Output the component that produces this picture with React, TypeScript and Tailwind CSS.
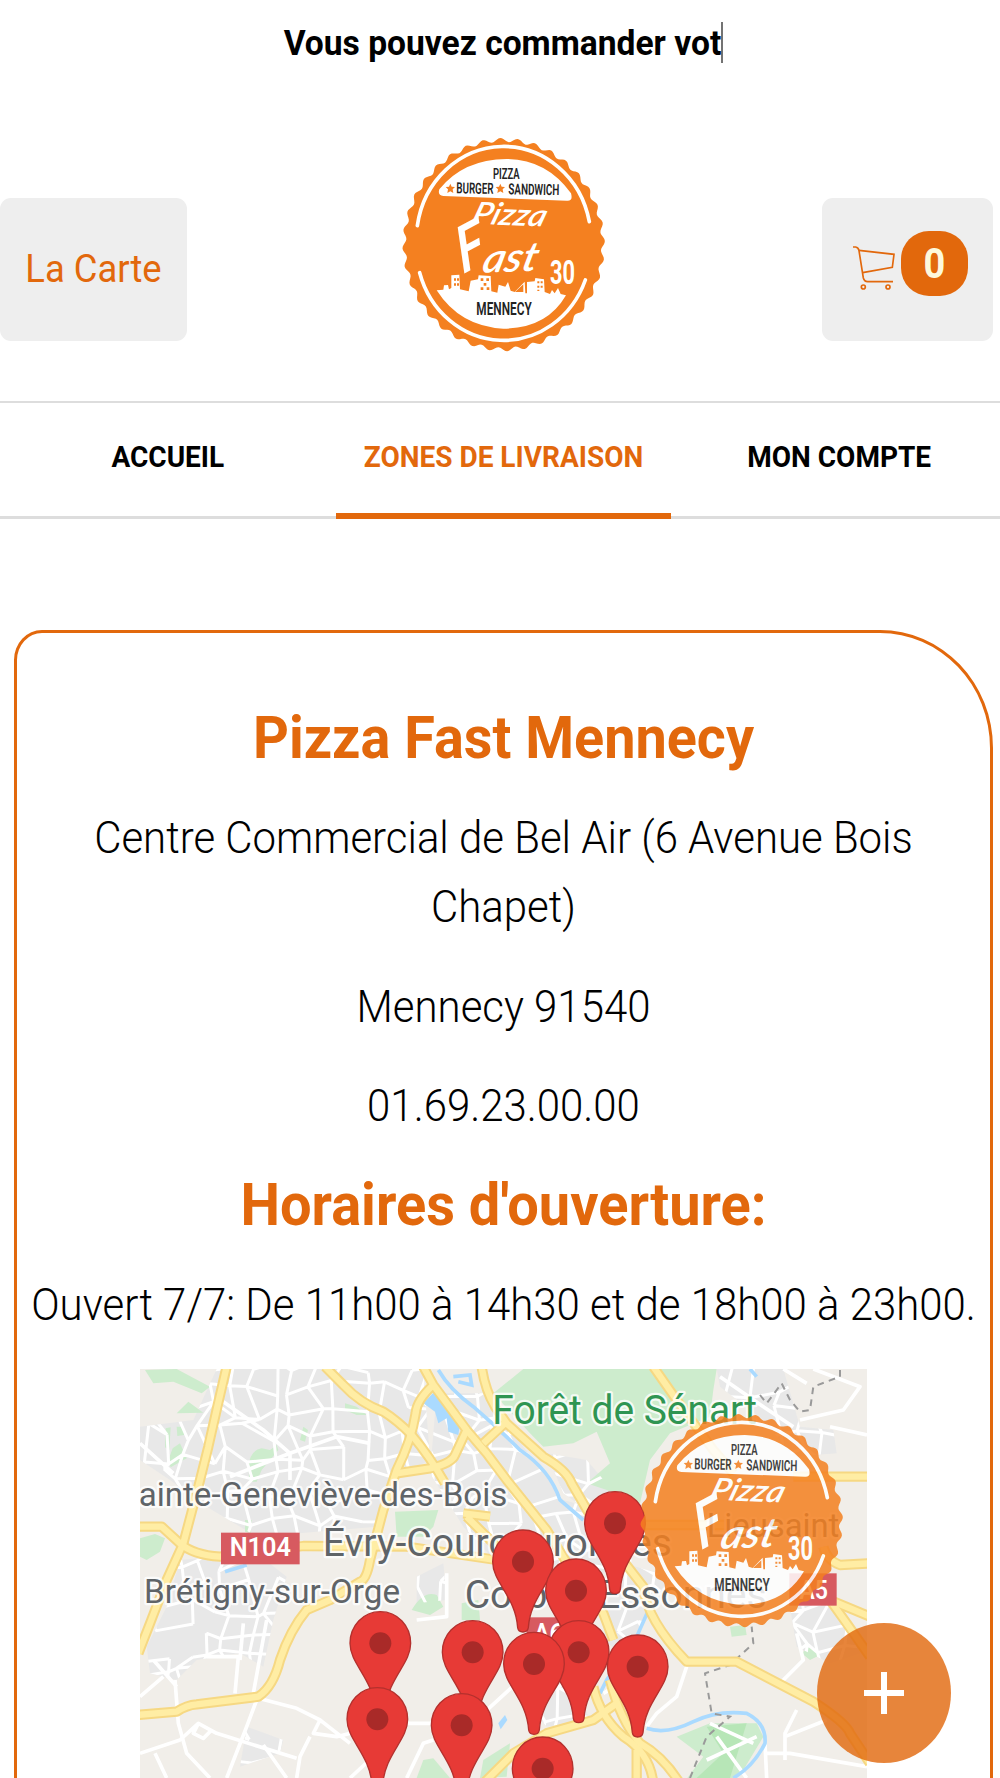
import { useMemo } from "react";

const ROADS = [
  "M290 20 L262 140 L235 260 L205 380 L160 550 L110 660 L60 790 L25 880",
  "M585 20 L640 75 Q690 130 760 155 Q800 180 845 225 Q900 290 945 370",
  "M880 20 L910 75 L1010 210 L1070 280 L1130 360 L1250 510 L1330 640 L1420 760 L1450 840",
  "M910 75 Q860 120 857 160 Q845 240 800 330 L760 450 L720 600 Q710 660 690 665 L600 720 L530 750 Q480 810 450 900 Q430 980 385 1010 L200 1033 Q170 1035 140 1055 L20 1065",
  "M800 340 L900 325 Q965 310 975 285 L1010 210",
  "M20 500 L95 500 L150 550 Q190 585 270 590 L520 558 L830 560 L1100 600",
  "M1055 20 Q1065 90 1095 140 L1130 190 L1240 290 Q1310 330 1325 370 L1400 500 L1540 680 Q1550 780 1670 905 L1820 905 L2050 1025 Q2150 1090 2160 1120 L2220 1210",
  "M1060 250 L1130 185",
  "M1570 20 L1640 120 L1750 270 L1810 340",
  "M2220 350 L1990 350",
  "M1500 495 L1800 495",
  "M2220 610 L2130 615 Q2090 600 2080 560",
  "M2100 720 L2220 770",
  "M2100 720 L2150 790 L2220 890",
  "M1390 980 Q1410 1070 1480 1130 Q1560 1180 1570 1270",
  "M1440 960 Q1470 1080 1530 1150 Q1600 1190 1650 1270",
  "M1060 1270 L1150 1180 L1250 1120 L1390 1080 L1460 1030",
  "M1000 460 L1080 470 M1010 470 L1100 560",
  "M1520 1170 L1520 1270",
];

const URBAN = [
  "M30 200 L190 180 L260 27 L880 27 L900 300 L800 350 L740 500 L380 530 L230 440 L120 360 L30 300Z",
  "M150 600 L380 580 L470 650 L430 780 L400 920 L330 880 L200 900 L140 960 L60 940 L50 860 L110 740Z",
  "M920 100 L1060 100 L1300 420 L1520 480 L1500 640 L1130 640 L1000 500 L900 340Z",
  "M1250 280 L1370 300 L1480 430 L1400 470 L1300 400Z",
  "M1760 27 L1960 27 L2010 200 L2110 210 L2120 280 L1990 290 L1900 180 L1770 80Z",
  "M1450 600 L1620 650 L1560 740 L1500 900 L1420 840Z",
  "M1980 740 L2110 730 L2190 880 L2100 910 L2000 860Z",
  "M350 1100 L460 1140 L450 1180 L330 1220Z",
  "M1170 1000 L1330 960 L1380 1080 L1250 1100Z",
  "M860 650 L940 610 L950 720 L860 730Z",
];

const GREENS = [
  "M45 30 L140 27 L240 80 L215 100 L130 65 L70 70Z",
  "M140 160 L175 125 L220 158Z",
  "M107 205 L122 202 L118 270 L105 262Z",
  "M140 200 L162 200 L162 225 L142 228Z",
  "M128 265 L150 250 L170 295 L122 322 L115 300Z",
  "M355 320 Q360 270 395 265 L420 270 L440 255 L445 270 L395 330 L380 365 L358 365Z",
  "M645 130 L680 140 L710 165 L680 165 L645 150Z",
  "M795 455 L925 450 L910 500 L880 530 L800 530Z",
  "M30 535 L75 522 L105 535 L90 575 L50 600 L30 590Z",
  "M845 750 Q880 690 920 705 L940 740 L900 765Z",
  "M345 480 L365 480 L362 520 L345 515Z",
  "M995 730 L1045 720 L1050 780 L995 780Z",
  "M510 240 L520 200 L534 210 L525 245Z",
  "M1180 27 L1760 27 L1750 90 L1740 170 L1620 220 L1560 300 L1530 430 L1460 400 L1370 370 L1440 310 L1400 215 L1330 250 L1240 260 L1200 220 L1090 100Z",
  "M1060 1200 L1140 1150 L1130 1250 L1050 1254Z",
  "M860 1254 L880 1200 L910 1195 L960 1254Z",
  "M1640 1130 L1740 1090 L1880 1090 L1900 1130 L1840 1230 L1800 1270 L1660 1270 L1720 1190Z",
  "M1800 800 L1845 795 L1850 825 L1805 830Z",
  "M2015 880 L2040 860 L2070 885 L2040 900Z",
];

const PINS = [
  [1455, 490],
  [1179, 605],
  [1338, 692],
  [751, 850],
  [1028, 877],
  [1346, 877],
  [1212, 912],
  [1523, 920],
  [742, 1078],
  [995, 1096],
  [1238, 1226],
];

function scallop(cx: number, cy: number, rx: number, ry: number) {
  const pts: string[] = [];
  for (let i = 0; i < 360; i++) {
    const t = (i / 360) * Math.PI * 2;
    const k = 1 + 0.019 * Math.cos(t * 36 + 1.2);
    pts.push(`${(cx + rx * k * Math.cos(t)).toFixed(1)} ${(cy + ry * k * Math.sin(t)).toFixed(1)}`);
  }
  return `M${pts.join("L")}Z`;
}

// Small side streets, drawn inside the built-up areas only
function streets() {
  let seed = 7;
  const rnd = () => {
    seed = (seed * 16807) % 2147483647;
    return seed / 2147483647;
  };
  const cols = 34;
  const rows = 20;
  const grid = Array.from({ length: rows * cols }, (_, i) => [
    30 + (i % cols) * 66 + (rnd() - 0.5) * 58,
    20 + Math.floor(i / cols) * 66 + (rnd() - 0.5) * 58,
  ]);
  let d = "";
  grid.forEach(([x, y], i) => {
    const right = grid[i + 1];
    const down = grid[i + cols];
    if (right && (i + 1) % cols !== 0 && rnd() > 0.12) d += `M${x} ${y}L${right[0]} ${right[1]}`;
    if (down && rnd() > 0.12) d += `M${x} ${y}L${down[0]} ${down[1]}`;
  });
  return d;
}

function Logo({ className }: { className?: string }) {
  return (
    <svg viewBox="0 0 690 690" className={className} fontFamily="Roboto, sans-serif">
      <path d={scallop(341, 344, 298, 314)} fill="#f48020" />
      <g fill="none" stroke="#fff" strokeWidth="11" strokeLinecap="round">
        <path d="M82 287 A262 280 0 0 1 598 275" />
        <path d="M89 428 A262 280 0 0 0 586 450" />
      </g>
      <path d="M148 178 Q220 88 350 87 Q470 88 543 190 Q550 214 530 212 L160 198 Q142 196 148 178Z" fill="#fff" />
      <path
        d="M140 481 L160 479 L162 466 L174 465 L177 478 L184 474 L184 436 L208 434 L210 478 L236 484 L242 452 L264 448 L266 436 L302 438 L304 484 L322 488 L326 464 L346 470 L354 456 L362 482 L374 486 L404 455 L406 490 L411 490 L411 456 L434 454 L436 444 L462 448 L464 486 L480 492 L486 480 L494 490 L504 474 L512 492 L528 496 Q470 596 340 596 Q210 590 140 481Z"
        fill="#fff"
      />
      <g fill="#f48020">
        <path d="M192 445h6v7h-6zM201 445h6v7h-6zM192 460h6v7h-6zM201 460h6v7h-6z" />
        <path d="M272 445h8v8h-8zM289 445h8v8h-8zM281 459h8v8h-8zM272 472h8v8h-8zM290 472h8v8h-8z" />
        <path d="M442 454h6v6h-6zM452 454h6v6h-6zM442 467h6v6h-6zM452 467h6v6h-6zM442 479h6v4h-6z" />
        <path d="M375 486 L400 463 L400 486Z" />
        <path d="M181 161 l4 9 10 1 -7 7 2 11 -9 -5 -9 5 2 -11 -7 -7 10 -1z" />
        <path d="M331 161 l4 9 10 1 -7 7 2 11 -9 -5 -9 5 2 -11 -7 -7 10 -1z" />
      </g>
      <g fill="#222" fontWeight="600" fontSize="46">
        <text x="309" y="147" textLength="80" lengthAdjust="spacingAndGlyphs">PIZZA</text>
        <text x="199" y="190" textLength="111" lengthAdjust="spacingAndGlyphs" transform="rotate(1 199 190)">BURGER</text>
        <text x="355" y="193" textLength="153" lengthAdjust="spacingAndGlyphs" transform="rotate(1 355 193)">SANDWICH</text>
        <text x="259" y="556" fontSize="56" textLength="166" lengthAdjust="spacingAndGlyphs">MENNECY</text>
      </g>
      <g fill="#fff" fontWeight="600" fontStyle="italic" fontFamily="Lato, sans-serif">
        <text fontSize="92" textLength="222" lengthAdjust="spacingAndGlyphs" transform="translate(240 281) rotate(2) skewX(-16)">Pizza</text>
        <text fontSize="176" fontWeight="400" textLength="84" lengthAdjust="spacingAndGlyphs" stroke="#fff" strokeWidth="6" transform="translate(218 430) rotate(-28) skewX(-14)">F</text>
        <text fontSize="122" textLength="164" lengthAdjust="spacingAndGlyphs" transform="translate(272 428) rotate(-2) skewX(-16)">ast</text>
      </g>
      <text x="480" y="461" fill="#fff" fontSize="98" fontWeight="700" textLength="75" lengthAdjust="spacingAndGlyphs">30</text>
    </svg>
  );
}

function CartIcon() {
  return (
    <svg viewBox="0 0 126 132" className="w-[42px] h-[44px]" fill="none" stroke="#e2680c" strokeWidth="5">
      <path d="M0 3 H8 Q16 4 18 14 L31 96 Q34 107 44 107 H120" />
      <path d="M18 13 L123 25 L118 64 L29 80" />
      <circle cx="31" cy="123" r="6" />
      <circle cx="105" cy="123" r="6" />
    </svg>
  );
}

function DeliveryMap() {
  const side = useMemo(streets, []);
  return (
    <svg viewBox="30 27 2181 1227" className="w-[727px] h-[409px]" fontFamily="Roboto, sans-serif">
      <defs>
        <clipPath id="urban">
          {URBAN.map((d) => <path key={d} d={d} />)}
        </clipPath>
      </defs>
      <rect x="30" y="27" width="2181" height="1227" fill="#f1eee9" />
      {URBAN.map((d) => <path key={d} d={d} fill="#e8e8e8" />)}
      {GREENS.map((d) => <path key={d} d={d} fill="#cdeccd" />)}
      <path d="M1730 1100 L1850 1090 L1800 1254 L1700 1254 L1780 1180Z" fill="#b7e6b7" />
      <path d={side} clipPath="url(#urban)" fill="none" stroke="#fff" strokeWidth="9" />

      <g fill="none" stroke="#fff" strokeWidth="11" strokeLinejoin="round">
        <path d="M30 250 L130 340 M280 125 L400 210 L480 280 L480 360 M480 280 L620 230 L720 250 M480 280 L300 350" />
        <path d="M385 1015 L500 1045 L570 1080 L550 1120 L620 1130 L700 1110 M570 1080 L660 1150" />
        <path d="M380 1020 L350 1100 L290 1254 M135 960 L145 1090 L170 1180 L240 1254" />
        <path d="M30 1180 L150 1140 L205 1090 L260 1120 L500 1195 M205 1090 L190 1120 L220 1135 L245 1110" />
        <path d="M500 1254 L510 1190 L540 1130 M400 1155 L470 1254 M75 1180 L110 1254" />
        <path d="M230 890 L325 890 L315 1000 M340 790 L330 900 M410 780 L370 1000" />
        <path d="M70 900 L140 980 M30 1010 L100 950 M950 640 L950 770 L860 780" />
        <path d="M830 1090 L910 1090 M830 1254 L880 1150 L910 1140 M660 1254 L740 1180" />
        <path d="M1060 1060 L1180 950 M1770 50 L1900 140 L1990 200 M2050 27 L2190 80 L2140 150 L2010 180" />
        <path d="M2100 200 L2211 225 M1960 27 L2030 70" />
        <path d="M1670 920 L1640 1010 L1580 1060 L1550 1100 M1540 930 L1420 1000" />
        <path d="M2000 820 L2020 900 L1950 970 M2000 1050 L1965 1120 L1965 1200 M1965 1130 L2090 1080 M1905 1150 L1910 1254" />
        <path d="M1910 1180 L1980 1180 L2211 1220 M1740 1090 L1870 1150 M1730 1200 L1880 1130 M1760 1130 L1850 1254" />
      </g>

      <g fill="none" stroke="#aadaff" strokeWidth="11">
        <path d="M925 30 Q960 90 1030 140 Q1100 200 1170 270 Q1260 330 1290 420 L1360 480" />
        <path d="M970 50 L1020 45 L1025 75 L985 65 M1560 740 L1520 830 L1430 960 L1410 1000" />
        <path d="M1550 1105 Q1610 1125 1690 1085 Q1760 1050 1850 1060 Q1910 1090 1905 1150 Q1870 1220 1810 1254" />
        <path d="M1860 27 L1880 50 M285 635 L350 615" />
      </g>
      <path d="M880 130 L910 98 L940 120 L960 160 L990 190 L985 225 L955 215 L950 175 L925 190 L915 155Z" fill="#aadaff" />
      <path d="M1105 1090 L1125 1065 L1132 1080 L1112 1108Z" fill="#aadaff" />

      <g fill="none" stroke="#9a9a9a" strokeWidth="6" strokeDasharray="20 16">
        <path d="M1680 1254 L1730 1130 L1800 1070 L1745 1060 L1725 940 L1800 915 L1870 850 L1865 800" />
        <path d="M2130 30 L2130 50 L2050 80 L2040 150 L2010 155 L1980 120 L1955 70 L1910 130 L1890 105" />
      </g>

      <g fill="none" strokeLinejoin="round">
        {ROADS.map((d) => <path key={d} d={d} stroke="#f6d883" strokeWidth="31" />)}
        {ROADS.map((d) => <path key={d} d={d} stroke="#ffeda4" strokeWidth="19" />)}
      </g>

      <rect x="273" y="518" width="236" height="95" fill="#d75a60" />
      <rect x="1190" y="772" width="130" height="95" fill="#d75a60" />
      <rect x="1978" y="640" width="142" height="97" fill="#d75a60" />
      <g fill="#fff" fontSize="78" fontWeight="600">
        <text x="299" y="587" textLength="184" lengthAdjust="spacingAndGlyphs">N104</text>
        <text x="1212" y="846" textLength="86" lengthAdjust="spacingAndGlyphs">A6</text>
        <text x="2008" y="716" textLength="86" lengthAdjust="spacingAndGlyphs">A5</text>
      </g>

      <g fill="#5f6468" fontWeight="450" stroke="#fff" strokeOpacity="0.8" strokeWidth="14" strokeLinejoin="round" paintOrder="stroke">
        <text x="26" y="438" fontSize="97" textLength="1106" lengthAdjust="spacingAndGlyphs">ainte-Geneviève-des-Bois</text>
        <text x="578" y="587" fontSize="114" textLength="1048" lengthAdjust="spacingAndGlyphs">Évry-Courcouronnes</text>
        <text x="42" y="728" fontSize="99" textLength="768" lengthAdjust="spacingAndGlyphs">Brétigny-sur-Orge</text>
        <text x="1004" y="744" fontSize="114" textLength="906" lengthAdjust="spacingAndGlyphs">Corbeil-Essonnes</text>
        <text x="1730" y="532" fontSize="97" textLength="398" lengthAdjust="spacingAndGlyphs">Lieusaint</text>
        <text x="1087" y="193" fontSize="123" textLength="794" lengthAdjust="spacingAndGlyphs" fill="#2f9552">Forêt de Sénart</text>
      </g>

      {PINS.map(([x, y]) => (
        <g key={`${x}-${y}`} transform={`translate(${x} ${y})`}>
          <path
            d="M0 -95 C52 -95 91 -52 91 0 C91 62 22 105 16 198 Q14 211 0 211 Q-14 211 -16 198 C-22 105 -91 62 -91 0 C-91 -52 -52 -95 0 -95Z"
            fill="#e73a36"
            stroke="#b4302d"
            strokeWidth="4"
          />
          <circle r="33" fill="#a92a28" />
        </g>
      ))}
    </svg>
  );
}

const NAV = [
  { label: "ACCUEIL", active: false },
  { label: "ZONES DE LIVRAISON", active: true },
  { label: "MON COMPTE", active: false },
];

export default function App() {
  return (
    <div className="relative w-[1000px] h-[1778px] overflow-hidden bg-white font-['Roboto',sans-serif] text-black">
      <div className="w-[1007px]">
        <div className="flex h-[84px] justify-center pt-[22px]">
          <span className="h-[41px] border-r-2 border-neutral-500 text-[33.6px] leading-[41px] font-bold whitespace-nowrap">
            <span className="inline-block scale-y-105">Vous pouvez commander vot</span>
          </span>
        </div>

        <header className="flex h-[317px] items-start justify-between pt-[46px] pr-[14px]">
          <a className="mt-[68px] flex h-[143px] w-[187px] items-center justify-center rounded-[11px] bg-[#eee] text-[36.4px] text-[#e2680c]">
            <span className="inline-block scale-y-105">La Carte</span>
          </a>
          <Logo className="w-[230px] h-[230px]" />
          <a className="mt-[68px] flex h-[143px] w-[171px] items-start rounded-[11px] bg-[#eee] pl-[31px] pt-[33px]">
            <span className="mt-[15px]"><CartIcon /></span>
            <span className="ml-[6px] flex h-[65px] w-[67px] items-center justify-center rounded-[28px] bg-[#e2680c] pt-px text-[38px] font-bold text-[#fdf8dc]">
              <span className="inline-block scale-y-110">0</span>
            </span>
          </a>
        </header>

        <nav className="flex h-[118px] border-t-2 border-t-[#ddd] border-b-[3px] border-b-[#ddd]">
          {NAV.map((n) => (
            <a
              key={n.label}
              className={
                n.active
                  ? "flex flex-1 -mb-[3px] justify-center border-b-[6px] border-[#e2680c] pt-[34px] text-[28px] leading-[42px] font-bold text-[#e2680c]"
                  : "flex flex-1 justify-center pt-[34px] text-[28px] leading-[42px] font-bold"
              }
            >
              <span className="inline-block h-[42px] scale-y-105">{n.label}</span>
            </a>
          ))}
        </nav>

        <section className="mt-[111px] ml-[14px] flex h-[1300px] w-[979px] flex-col items-center rounded-tl-[28px_30px] rounded-tr-[113px_118px] border-[3px] border-[#e2680c] pt-[69px] text-center">
          <h1 className="text-[55.8px] leading-[72px] font-bold text-[#e2680c] scale-y-105">Pizza Fast Mennecy</h1>
          <div className="mt-[29px] flex flex-col gap-[29px] text-[41.95px] leading-[70px] font-light">
            <p className="my-[4px] leading-[66px] scale-y-105">
              Centre Commercial de Bel Air (6 Avenue Bois
              <br />
              Chapet)
            </p>
            <p className="scale-y-105">Mennecy 91540</p>
            <p className="scale-y-105">01.69.23.00.00</p>
          </div>
          <h2 className="mt-[28px] text-[56px] leading-[72px] font-bold text-[#e2680c] scale-y-105">Horaires d'ouverture:</h2>
          <p className="mt-[29px] mb-[29px] text-[41.95px] leading-[70px] font-light whitespace-nowrap scale-y-105">
            Ouvert 7/7: De 11h00 à 14h30 et de 18h00 à 23h00.
          </p>
          <DeliveryMap />
        </section>
      </div>

      <Logo className="absolute left-[628px] top-[1406px] w-[230px] h-[230px] opacity-85" />
      <button className="absolute left-[817px] top-[1623px] flex h-[140px] w-[134px] items-center justify-center rounded-[50%] bg-[#e1670a]/80">
        <svg viewBox="0 0 40 42" className="w-[40px] h-[42px]" fill="#fff">
          <path d="M17 0h6v18h17v6H23v18h-6V24H0v-6h17z" />
        </svg>
      </button>
    </div>
  );
}
